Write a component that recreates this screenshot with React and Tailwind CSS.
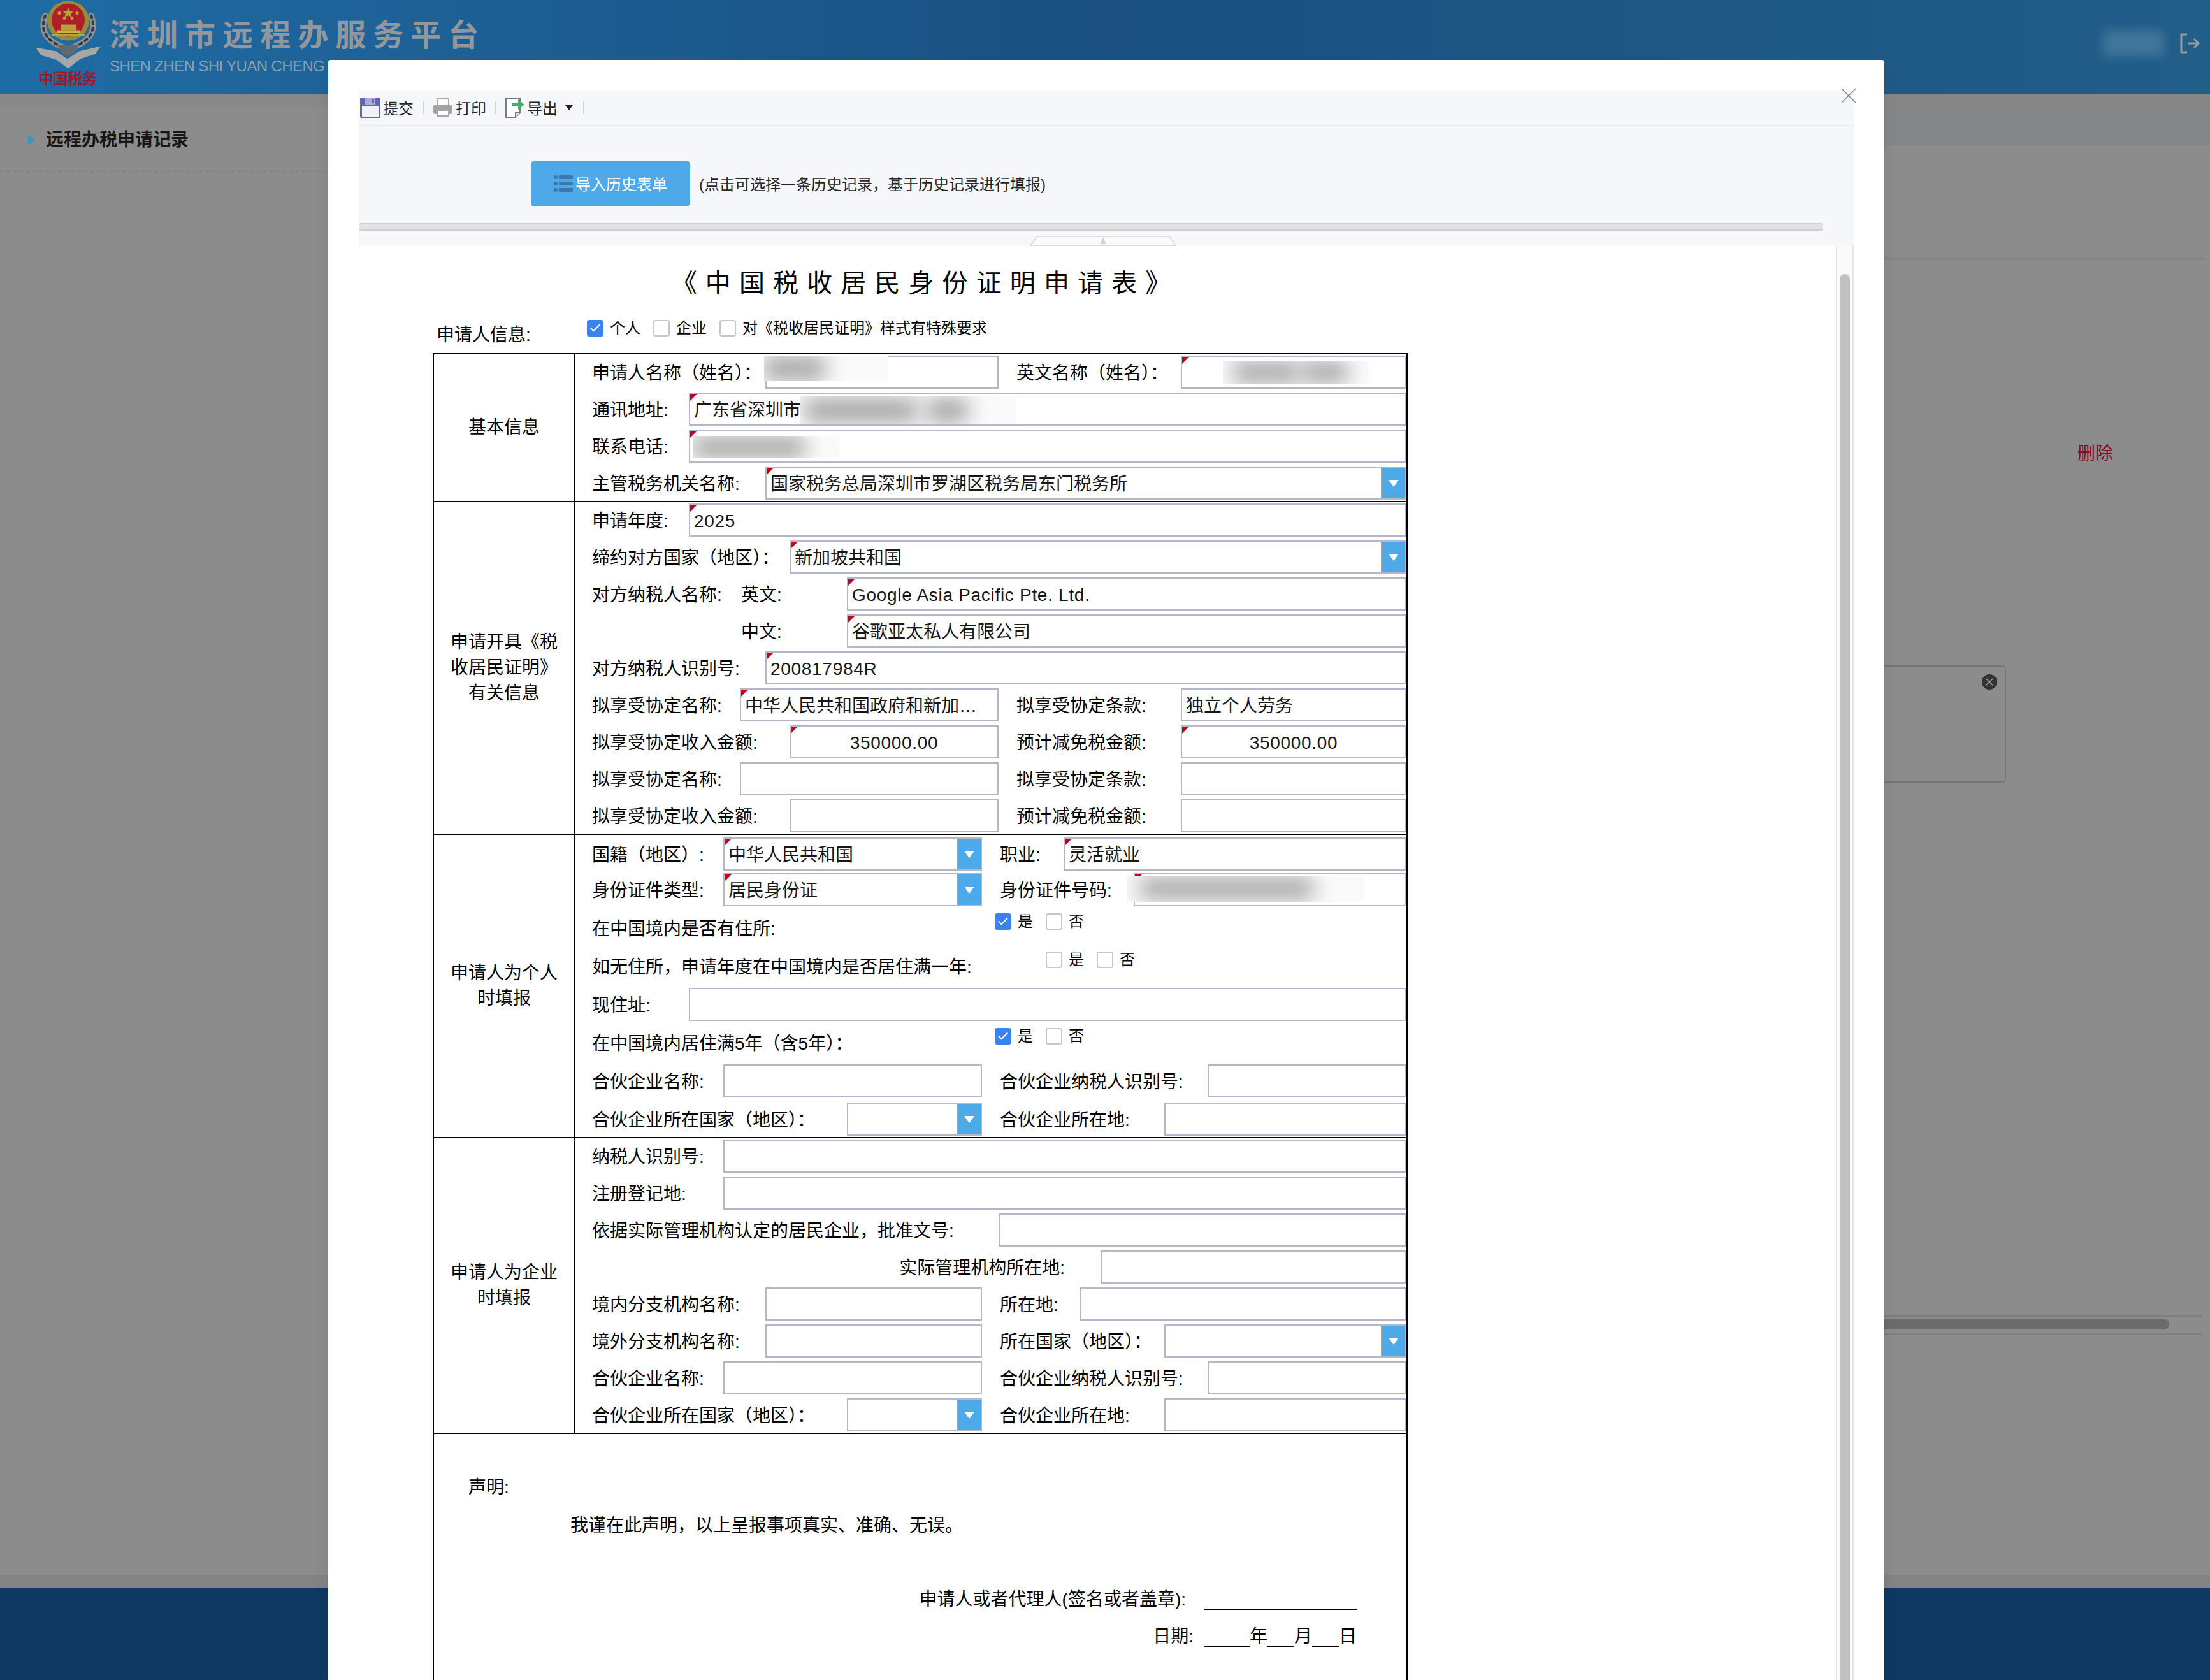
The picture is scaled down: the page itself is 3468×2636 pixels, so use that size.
import React from 'react';
import { Check } from 'lucide-react';

const Mark = () => (
    <svg className="absolute left-0 top-0 size-3" viewBox="0 0 12 12">
        <polygon points="0,0 11,0 0,11" fill="#c1051f" />
    </svg>
);

const Arrow = () => (
    <div className="flex w-9.5 flex-none items-center justify-center self-stretch border-l-2 border-neutral-400 bg-[#4ea9e9]">
        <svg className="h-3 w-4" viewBox="0 0 16 12">
            <polygon points="0,1 16,1 8,12" fill="#ffffff" />
        </svg>
    </div>
);

const Field = ({ value, mark, arrow, center, latin, className = 'flex-1', children }) => (
    <div className={`relative flex min-w-0 items-center border-2 border-[#b5b8ca] bg-white text-neutral-900 ${className}`}>
        <span className={`flex-1 truncate pt-1 ${center ? 'text-center' : 'pl-1.5'} ${latin ? 'tracking-wide' : ''}`}>{value}</span>
        {arrow && <Arrow />}
        {mark && <Mark />}
        {children}
    </div>
);

const Label = ({ className = '', children }) => (
    <div className={`flex flex-none items-center whitespace-nowrap pt-1 ${className}`}>{children}</div>
);

const Row = ({ className = '', children }) => (
    <div className={`flex h-14 py-0.5 ${className}`}>{children}</div>
);

const Tick = ({ checked, children }) => (
    <div className="flex items-center gap-2.5 text-2xl">
        {checked ? (
            <div className="flex size-6.5 items-center justify-center rounded-sm bg-[#3b82ec]">
                <Check className="size-5 text-white" strokeWidth={2.5} />
            </div>
        ) : (
            <div className="size-6.5 rounded-sm border-2 border-[#c3c8cc] bg-white" />
        )}
        <span>{children}</span>
    </div>
);

const Section = ({ title, className = '', children }) => (
    <div className="flex border-b-2 border-black">
        <div className="flex w-55 flex-none items-center justify-center text-center leading-10">{title}</div>
        <div className={`flex-1 border-l-2 border-black pl-6.5 ${className}`}>{children}</div>
    </div>
);

const Sep = ({ className = '' }) => <div className={`h-5 w-0.5 bg-neutral-300 ${className}`} />;

const Emblem = () => (
    <svg className="h-27 w-33" viewBox="0 0 132 107">
        <g fill="none" strokeLinecap="round">
            <path d="M31 24 Q18 58 60 74" stroke="#8d9297" strokeWidth="9" />
            <path d="M103 24 Q116 58 74 74" stroke="#8d9297" strokeWidth="9" />
            <path d="M31 24 Q18 58 60 74" stroke="#33393f" strokeWidth="4" strokeDasharray="4 6" />
            <path d="M103 24 Q116 58 74 74" stroke="#33393f" strokeWidth="4" strokeDasharray="4 6" />
        </g>
        <polygon points="16,74 48,80 66,92 84,80 118,72 110,84 86,92 67,107 48,93 24,86" fill="#a4a7a6" />
        <polygon points="50,70 84,70 76,84 67,88 58,84" fill="#60696f" />
        <ellipse cx="67" cy="32" rx="33" ry="31" fill="#98893c" />
        <ellipse cx="67" cy="31" rx="26" ry="26" fill="#b01f25" />
        <polygon points="67,11 69.5,17 76,17 71,21 73,27 67,23.5 61,27 63,21 58,17 64.5,17" fill="#b9a23e" />
        <circle cx="53" cy="20" r="2.5" fill="#b9a23e" />
        <circle cx="81" cy="20" r="2.5" fill="#b9a23e" />
        <circle cx="61" cy="28" r="2.5" fill="#b9a23e" />
        <circle cx="73" cy="28" r="2.5" fill="#b9a23e" />
        <rect x="55" y="38" width="24" height="9" fill="#b9a23e" />
        <rect x="49" y="47" width="36" height="4" fill="#c9b24a" />
        <rect x="41" y="53" width="52" height="3" fill="#b9a23e" />
    </svg>
);

const SaveIcon = () => (
    <svg className="size-8 flex-none" viewBox="0 0 32 32">
        <rect width="32" height="32" rx="2" fill="#6565b0" />
        <rect x="3" y="14" width="26" height="16" fill="#f1f1fa" />
        <rect x="8" y="1" width="16" height="10" fill="#a9a9d6" />
        <rect x="18" y="2" width="4" height="7" fill="#6565b0" />
    </svg>
);

const PrintIcon = () => (
    <svg className="size-8 flex-none" viewBox="0 0 32 32">
        <rect x="7" y="2" width="18" height="12" fill="#ffffff" stroke="#a9a9a9" strokeWidth="2" />
        <rect x="1" y="12" width="30" height="14" rx="3" fill="#a3a3a3" />
        <rect x="7" y="20" width="18" height="9" fill="#ffffff" stroke="#a9a9a9" strokeWidth="2" />
    </svg>
);

const ExportIcon = () => (
    <svg className="h-8 w-8 flex-none" viewBox="0 0 32 32">
        <path d="M1 1H23V24L16 31H1Z" fill="#ffffff" stroke="#7c7c7c" strokeWidth="2" />
        <path d="M16 31V24H23" fill="#e5e5e5" stroke="#7c7c7c" strokeWidth="2" />
        <path d="M11 8H20V3L30 11L20 19V14H11Z" fill="#3fb45f" />
    </svg>
);

const ListIcon = () => (
    <svg className="h-7 w-7.5 flex-none" viewBox="0 0 30 28" fill="#3d76ad">
        <circle cx="3" cy="4" r="3" />
        <circle cx="3" cy="14" r="3" />
        <circle cx="3" cy="24" r="3" />
        <rect x="8" y="1" width="22" height="6" rx="1" />
        <rect x="8" y="11" width="22" height="6" rx="1" />
        <rect x="8" y="21" width="22" height="6" rx="1" />
    </svg>
);

const Dialog = () => (
    <div className="absolute bottom-0 left-128.75 top-23.5 flex w-610.5 flex-col rounded-t-sm bg-white px-12 pt-12 shadow-xl">
        <svg className="absolute right-11 top-11 size-6" viewBox="0 0 24 24" fill="none" stroke="#888888" strokeWidth="1.5">
            <path d="M1 1L23 23M23 1L1 23" />
        </svg>

        <div className="flex h-14 flex-none items-center border-b-2 border-[#e9ebee] bg-[#f5f7fa] pl-0.5 text-2xl text-neutral-800">
            <SaveIcon />
            <span className="ml-1 pt-1">提交</span>
            <Sep className="mx-3.5" />
            <PrintIcon />
            <span className="ml-1 pt-1">打印</span>
            <Sep className="ml-3.5 mr-3.5" />
            <ExportIcon />
            <span className="ml-0.5 pt-1">导出</span>
            <svg className="ml-3 h-2 w-3" viewBox="0 0 12 8">
                <polygon points="0,0 12,0 6,8" fill="#222222" />
            </svg>
            <Sep className="ml-4" />
        </div>

        <div className="flex-none bg-[#f5f7fa] pt-13.5">
            <div className="ml-67.5 flex items-center gap-3.5">
                <div className="flex h-18 w-62.5 items-center justify-center gap-1 rounded-md bg-[#4ea9e9] text-2xl text-white">
                    <ListIcon />
                    <span className="pt-1">导入历史表单</span>
                </div>
                <span className="pt-1 text-2xl text-neutral-800">(点击可选择一条历史记录，基于历史记录进行填报)</span>
            </div>
            <div className="mr-12 mt-6.5 h-3 rounded-sm border-y-2 border-[#cfcfd0] bg-[#e3e3e3]" />
            <div className="mt-2 flex h-4 justify-center pr-2.5">
                <svg className="h-4 w-57" viewBox="0 0 228 16">
                    <polygon points="10,1 218,1 228,16 0,16" fill="#fafbfc" stroke="#dddddd" strokeWidth="2" />
                    <polygon points="114,3 119,13 109,13" fill="#d0d0d0" />
                </svg>
            </div>
        </div>

        <div className="flex min-h-0 flex-1 overflow-hidden">
            <div className="flex-1">
                <Form />
            </div>
            <div className="flex w-7 flex-none flex-col border-x-2 border-neutral-200 bg-neutral-50 px-1">
                <div className="mt-11 flex-1 rounded-t-full bg-[#c1c1c1]" />
            </div>
        </div>
    </div>
);

const Form = () => (
    <div className="ml-29 w-382.5 text-[28px] leading-8 text-black">
        <div className="pl-1 pt-9.5 text-center text-[40px] leading-10 tracking-wide">《 中 国 税 收 居 民 身 份 证 明 申 请 表 》</div>

        <div className="flex h-22.5 pl-1.5">
            <div className="mt-11.5 w-59 flex-none">申请人信息:</div>
            <div className="mt-9.5 flex h-6.5 gap-5">
                <Tick checked>个人</Tick>
                <Tick>企业</Tick>
                <Tick>对《税收居民证明》样式有特殊要求</Tick>
            </div>
        </div>

        <div className="border-2 border-b-0 border-black">
            <Section title="基本信息" className="space-y-0.5">
                <Row>
                    <div className="flex w-159.5 flex-none">
                        <Label className="w-68">申请人名称（姓名）：</Label>
                        <Field>
                            <div className="absolute -left-1 -top-0.5 h-10 w-48.5 overflow-hidden bg-neutral-50">
                                <div className="mt-0.5 h-9 w-24 bg-neutral-400 blur-lg" />
                            </div>
                        </Field>
                    </div>
                    <Label className="w-71.5 pl-7">英文名称（姓名）：</Label>
                    <Field mark>
                        <div className="absolute left-16 top-1.5 flex h-9 w-57 gap-1 overflow-hidden bg-neutral-50 px-4 pt-0.5">
                            <div className="h-8 w-26 bg-neutral-400 blur-lg" />
                            <div className="h-8 w-18 bg-neutral-400 blur-lg" />
                        </div>
                    </Field>
                </Row>
                <Row>
                    <Label className="w-38">通讯地址:</Label>
                    <Field mark value="广东省深圳市">
                        <div className="absolute left-43 top-1 flex h-11 w-85 gap-4 overflow-hidden bg-neutral-50 px-2 pt-1">
                            <div className="h-9 w-44 bg-neutral-400 blur-lg" />
                            <div className="h-9 w-16 bg-neutral-400 blur-lg" />
                        </div>
                    </Field>
                </Row>
                <Row>
                    <Label className="w-38">联系电话:</Label>
                    <Field mark>
                        <div className="absolute left-1 top-2 h-8.5 w-57.5 overflow-hidden bg-neutral-50 pt-0.5">
                            <div className="h-8 w-44 bg-neutral-400 blur-lg" />
                        </div>
                    </Field>
                </Row>
                <Row>
                    <Label className="w-68">主管税务机关名称:</Label>
                    <Field mark arrow value="国家税务总局深圳市罗湖区税务局东门税务所" />
                </Row>
            </Section>

            <Section
                title={<>申请开具《税<br />收居民证明》<br />有关信息</>}
                className="space-y-0.5"
            >
                <Row>
                    <Label className="w-38">申请年度:</Label>
                    <Field mark latin value="2025" />
                </Row>
                <Row>
                    <Label className="w-77.5">缔约对方国家（地区）：</Label>
                    <Field mark arrow value="新加坡共和国" />
                </Row>
                <Row>
                    <Label className="w-58.5">对方纳税人名称:</Label>
                    <Label className="w-41.5">英文:</Label>
                    <Field mark latin value="Google Asia Pacific Pte. Ltd." />
                </Row>
                <Row>
                    <Label className="w-58.5" />
                    <Label className="w-41.5">中文:</Label>
                    <Field mark value="谷歌亚太私人有限公司" />
                </Row>
                <Row>
                    <Label className="w-68">对方纳税人识别号:</Label>
                    <Field mark latin value="200817984R" />
                </Row>
                <Row>
                    <div className="flex w-159.5 flex-none">
                        <Label className="w-58">拟享受协定名称:</Label>
                        <Field mark value="中华人民共和国政府和新加…" />
                    </div>
                    <Label className="w-71.5 pl-7">拟享受协定条款:</Label>
                    <Field value="独立个人劳务" />
                </Row>
                <Row>
                    <div className="flex w-159.5 flex-none">
                        <Label className="w-77.5">拟享受协定收入金额:</Label>
                        <Field mark center latin value="350000.00" />
                    </div>
                    <Label className="w-71.5 pl-7">预计减免税金额:</Label>
                    <Field mark center latin value="350000.00" />
                </Row>
                <Row>
                    <div className="flex w-159.5 flex-none">
                        <Label className="w-58">拟享受协定名称:</Label>
                        <Field />
                    </div>
                    <Label className="w-71.5 pl-7">拟享受协定条款:</Label>
                    <Field />
                </Row>
                <Row>
                    <div className="flex w-159.5 flex-none">
                        <Label className="w-77.5">拟享受协定收入金额:</Label>
                        <Field />
                    </div>
                    <Label className="w-71.5 pl-7">预计减免税金额:</Label>
                    <Field />
                </Row>
            </Section>

            <Section title={<>申请人为个人<br />时填报</>} className="pt-0.5">
                <Row>
                    <div className="flex w-153 flex-none">
                        <Label className="w-51.5">国籍（地区）:</Label>
                        <Field mark arrow value="中华人民共和国" />
                    </div>
                    <Label className="w-32 pl-7">职业:</Label>
                    <Field mark value="灵活就业" />
                </Row>
                <Row>
                    <div className="flex w-153 flex-none">
                        <Label className="w-51.5">身份证件类型:</Label>
                        <Field mark arrow value="居民身份证" />
                    </div>
                    <Label className="w-59.5 pl-7">身份证件号码:</Label>
                    <Field mark>
                        <div className="absolute -left-3 top-0.5 h-10.5 w-93 overflow-hidden bg-neutral-50 pl-5 pt-1">
                            <div className="h-8 w-68 bg-neutral-400 blur-lg" />
                        </div>
                    </Field>
                </Row>
                <Row className="mt-1">
                    <Label className="w-158">在中国境内是否有住所:</Label>
                    <div className="mb-5 flex items-center gap-5">
                        <Tick checked>是</Tick>
                        <Tick>否</Tick>
                    </div>
                </Row>
                <Row className="mt-1">
                    <Label className="w-178">如无住所，申请年度在中国境内是否居住满一年:</Label>
                    <div className="mb-5 flex items-center gap-5">
                        <Tick>是</Tick>
                        <Tick>否</Tick>
                    </div>
                </Row>
                <Row className="mt-1">
                    <Label className="w-38">现住址:</Label>
                    <Field />
                </Row>
                <Row className="mt-1">
                    <Label className="w-158">在中国境内居住满5年（含5年）：</Label>
                    <div className="mb-5 flex items-center gap-5">
                        <Tick checked>是</Tick>
                        <Tick>否</Tick>
                    </div>
                </Row>
                <Row className="mt-1">
                    <div className="flex w-153 flex-none">
                        <Label className="w-51.5">合伙企业名称:</Label>
                        <Field />
                    </div>
                    <Label className="w-88.5 pl-7">合伙企业纳税人识别号:</Label>
                    <Field />
                </Row>
                <Row className="mt-1">
                    <div className="flex w-153 flex-none">
                        <Label className="w-100">合伙企业所在国家（地区）：</Label>
                        <Field arrow />
                    </div>
                    <Label className="w-71.5 pl-7">合伙企业所在地:</Label>
                    <Field />
                </Row>
            </Section>

            <Section title={<>申请人为企业<br />时填报</>} className="space-y-0.5">
                <Row>
                    <Label className="w-51.5">纳税人识别号:</Label>
                    <Field />
                </Row>
                <Row>
                    <Label className="w-51.5">注册登记地:</Label>
                    <Field />
                </Row>
                <Row>
                    <Label className="w-159.5">依据实际管理机构认定的居民企业，批准文号:</Label>
                    <Field />
                </Row>
                <Row>
                    <Label className="w-199.5 justify-end pr-14">实际管理机构所在地:</Label>
                    <Field />
                </Row>
                <Row>
                    <div className="flex w-153 flex-none">
                        <Label className="w-68">境内分支机构名称:</Label>
                        <Field />
                    </div>
                    <Label className="w-38.5 pl-7">所在地:</Label>
                    <Field />
                </Row>
                <Row>
                    <div className="flex w-153 flex-none">
                        <Label className="w-68">境外分支机构名称:</Label>
                        <Field />
                    </div>
                    <Label className="w-71.5 pl-7">所在国家（地区）：</Label>
                    <Field arrow />
                </Row>
                <Row>
                    <div className="flex w-153 flex-none">
                        <Label className="w-51.5">合伙企业名称:</Label>
                        <Field />
                    </div>
                    <Label className="w-88.5 pl-7">合伙企业纳税人识别号:</Label>
                    <Field />
                </Row>
                <Row>
                    <div className="flex w-153 flex-none">
                        <Label className="w-100">合伙企业所在国家（地区）：</Label>
                        <Field arrow />
                    </div>
                    <Label className="w-71.5 pl-7">合伙企业所在地:</Label>
                    <Field />
                </Row>
            </Section>

            <div className="h-150 pl-13.5 pt-17">
                <div>声明:</div>
                <div className="ml-40 mt-7">我谨在此声明，以上呈报事项真实、准确、无误。</div>
                <div className="mt-21 flex justify-end pr-19.5">
                    <span>申请人或者代理人(签名或者盖章):</span>
                    <span className="ml-7 w-60 border-b-2 border-black" />
                </div>
                <div className="mt-6.5 flex justify-end pr-19.5">
                    <span>日期:</span>
                    <span className="ml-4 w-18 border-b-2 border-black" />
                    <span>年</span>
                    <span className="w-10.5 border-b-2 border-black" />
                    <span>月</span>
                    <span className="w-10.5 border-b-2 border-black" />
                    <span>日</span>
                </div>
            </div>
        </div>
    </div>
);

const App = () => (
    <div className="relative flex h-screen flex-col overflow-hidden bg-[#8c8c8c] font-['Liberation_Sans','Noto_Sans_CJK_SC',sans-serif]">
        <header className="flex h-37 flex-none bg-linear-to-r from-[#1f6ca5] via-[#1a4f80] to-[#215e88] pl-10">
            <div className="w-33 flex-none">
                <Emblem />
                <div className="whitespace-nowrap pl-5 text-2xl font-bold leading-8 tracking-tighter text-[#a01824]">中国税务</div>
            </div>
            <div className="whitespace-nowrap">
                <div className="pt-8 text-5xl font-bold leading-none tracking-[.23em] text-[#93979b]">深圳市远程办服务平台</div>
                <div className="mt-3 text-2xl leading-6 tracking-tight text-[#8e9eab]">SHEN ZHEN SHI YUAN CHENG BAN SHUI FU WU PING TAI</div>
            </div>
            <div className="ml-auto mr-4 mt-12 flex items-center gap-6 self-start">
                <div className="h-10 w-24 bg-white/15 blur-sm" />
                <svg className="h-8 w-8" viewBox="0 0 32 32" fill="none" stroke="#9c9c9c" strokeWidth="3">
                    <path d="M12 2H3V30H12" />
                    <path d="M13 16H29M23 9L30 16L23 23" />
                </svg>
            </div>
        </header>

        <div className="flex min-h-0 flex-1">
            <aside className="w-130 flex-none">
                <div className="h-5 bg-[#87888a]" />
                <div className="flex h-25.5 items-center gap-4 border-b-2 border-dashed border-[#7f7f7f] pl-11 pt-1 text-[28px] font-bold text-neutral-900">
                    <svg className="h-4 w-3" viewBox="0 0 12 16">
                        <polygon points="0,0 12,8 0,16" fill="#3a96bf" />
                    </svg>
                    远程办税申请记录
                </div>
            </aside>
            <main className="flex-1">
                <div className="h-20 bg-[#858687]" />
                <div className="ml-auto mr-2 mt-44 h-1 bg-[#858585]" />
                <div className="mr-38 mt-72 flex justify-end text-[28px] leading-8 text-[#8a0a1c]">删除</div>
                <div className="relative mr-80 mt-79 h-46 rounded-md border-2 border-[#757575]">
                    <div className="absolute right-3 top-3 flex size-6 items-center justify-center rounded-full bg-[#333333]">
                        <svg className="size-3" viewBox="0 0 12 12" fill="none" stroke="#aaaaaa" strokeWidth="1.5">
                            <path d="M1 1L11 11M11 1L1 11" />
                        </svg>
                    </div>
                </div>
                <div className="mr-3 mt-209 h-7.5 border-y-2 border-[#7f7f7f] pr-13 pt-1">
                    <div className="h-4 rounded-r-lg bg-[#6b6b6b]" />
                </div>
            </main>
        </div>
        <div className="h-5 flex-none bg-[#828385]" />
        <footer className="h-36 flex-none bg-[#0f3862]" />

        <Dialog />
    </div>
);

export default App;
